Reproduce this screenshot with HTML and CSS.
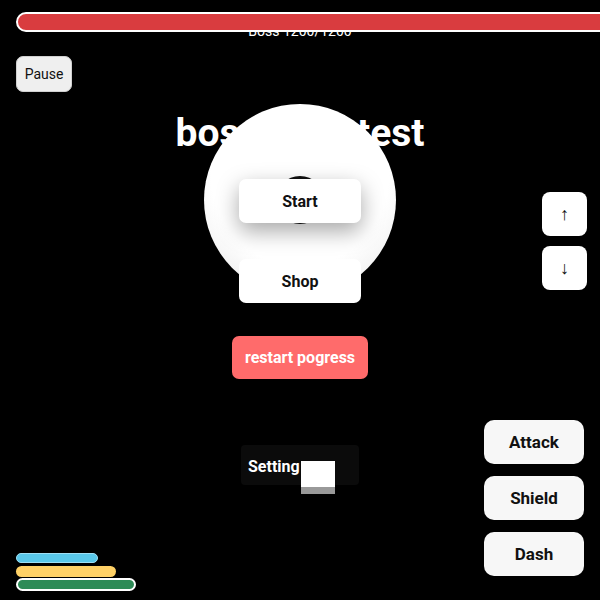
FILE: index.html
```html
<!DOCTYPE html>
<html>
<head>
<meta charset="utf-8">
<link rel="stylesheet" href="styles.css">
</head>
<body>
<div class="screen">
  <header class="hud-top">
    <div class="boss-bar"></div>
    <div class="boss-label">Boss 1200/1200</div>
  </header>
  <button class="pause">Pause</button>
  <main class="menu">
    <div class="orb"><span class="orb-core"></span></div>
    <h1 class="title">boss rush test</h1>
    <button class="menu-btn start">Start</button>
    <button class="menu-btn shop">Shop</button>
    <button class="restart">restart pogress</button>
    <div class="settings">
      <span class="settings-label">Setting</span>
      <span class="settings-toggle"></span>
    </div>
  </main>
  <aside class="dpad">
    <button class="dpad-btn">↑</button>
    <button class="dpad-btn">↓</button>
  </aside>
  <aside class="actions">
    <button class="action-btn">Attack</button>
    <button class="action-btn">Shield</button>
    <button class="action-btn">Dash</button>
  </aside>
  <div class="stats">
    <div class="stat stat-blue"></div>
    <div class="stat stat-yellow"></div>
    <div class="stat stat-green"></div>
  </div>
</div>
</body>
</html>
```

FILE: styles.css
```css
html, body {
  margin: 0;
  padding: 0;
  background: #000;
}
body {
  font-family: Roboto, "Liberation Sans", Arial, sans-serif;
  color: #fff;
}
.screen {
  position: relative;
  width: 600px;
  height: 600px;
  overflow: hidden;
}
button {
  font-family: Roboto, "Liberation Sans", Arial, sans-serif;
  border: none;
  padding: 0;
  cursor: pointer;
}
.hud-top {
  padding-top: 12px;
}
.boss-bar {
  position: relative;
  z-index: 2;
  margin-left: 16px;
  width: 620px;
  height: 16px;
  border: 2px solid #fff;
  border-radius: 10px;
  background: #d93c3f;
}
.boss-label {
  position: relative;
  z-index: 1;
  margin-top: -9px;
  text-align: center;
  font-size: 14px;
  line-height: 16px;
  color: #fff;
}
.pause {
  display: block;
  margin: 17px 0 0 16px;
  width: 56px;
  height: 36px;
  background: #efefef;
  border: 1px solid #d0d0d0;
  border-radius: 7px;
  font-size: 14px;
  color: #111;
}
.menu {
  position: relative;
  display: flex;
  flex-direction: column;
  align-items: center;
}
.orb {
  position: absolute;
  top: 12px;
  left: 204px;
  width: 192px;
  height: 192px;
  border-radius: 50%;
  background: radial-gradient(circle at 50% 38%, #fff 58%, #f2f2f2 78%, #dcdcdc 100%);
  z-index: 1;
}
.orb-core {
  position: absolute;
  left: 72px;
  top: 72px;
  width: 48px;
  height: 48px;
  border-radius: 50%;
  background: #111;
}
.title {
  margin: 19px 0 0;
  font-size: 39px;
  line-height: 44px;
  font-weight: 700;
  color: #fff;
}
.menu-btn {
  position: relative;
  z-index: 2;
  width: 122px;
  height: 44px;
  background: #fff;
  border-radius: 7px;
  font-size: 16px;
  font-weight: 700;
  color: #111;
}
.start {
  margin-top: 24px;
  box-shadow: 0 8px 22px rgba(0, 0, 0, 0.35);
}
.shop {
  margin-top: 36px;
}
.restart {
  margin-top: 33px;
  width: 136px;
  height: 43px;
  background: #ff6b6b;
  border-radius: 7px;
  font-size: 16px;
  font-weight: 700;
  color: #fff;
}
.settings {
  margin-top: 66px;
  width: 118px;
  height: 40px;
  box-sizing: border-box;
  padding: 15px 0 0 7px;
  display: flex;
  align-items: flex-start;
  background: #0b0b0b;
  border-radius: 4px;
}
.settings-label {
  font-size: 16px;
  line-height: 14px;
  font-weight: 700;
  color: #fff;
}
.settings-toggle {
  margin: 1px 0 0 1px;
  width: 34px;
  height: 26px;
  background: #fff;
  border-bottom: 7px solid #999;
}
.dpad {
  position: absolute;
  top: 192px;
  right: 13px;
  display: flex;
  flex-direction: column;
  gap: 10px;
}
.dpad-btn {
  width: 45px;
  height: 44px;
  background: #fff;
  border-radius: 8px;
  font-size: 18px;
  font-weight: 700;
  color: #111;
}
.actions {
  position: absolute;
  top: 420px;
  right: 16px;
  display: flex;
  flex-direction: column;
  gap: 12px;
}
.action-btn {
  width: 100px;
  height: 44px;
  background: #f7f7f7;
  border-radius: 10px;
  font-size: 17px;
  font-weight: 700;
  color: #111;
}
.stats {
  position: absolute;
  left: 16px;
  top: 553px;
  display: flex;
  flex-direction: column;
  gap: 3px;
}
.stat {
  border-radius: 6px;
}
.stat-blue {
  width: 80px;
  height: 8px;
  background: #5ac8ea;
  border: 1px solid #9fe0f5;
}
.stat-yellow {
  width: 100px;
  height: 11px;
  background: #ffd166;
  margin-bottom: -2px;
}
.stat-green {
  width: 116px;
  height: 9px;
  background: #2e8b57;
  border: 2px solid #fff;
  border-radius: 8px;
}
```
